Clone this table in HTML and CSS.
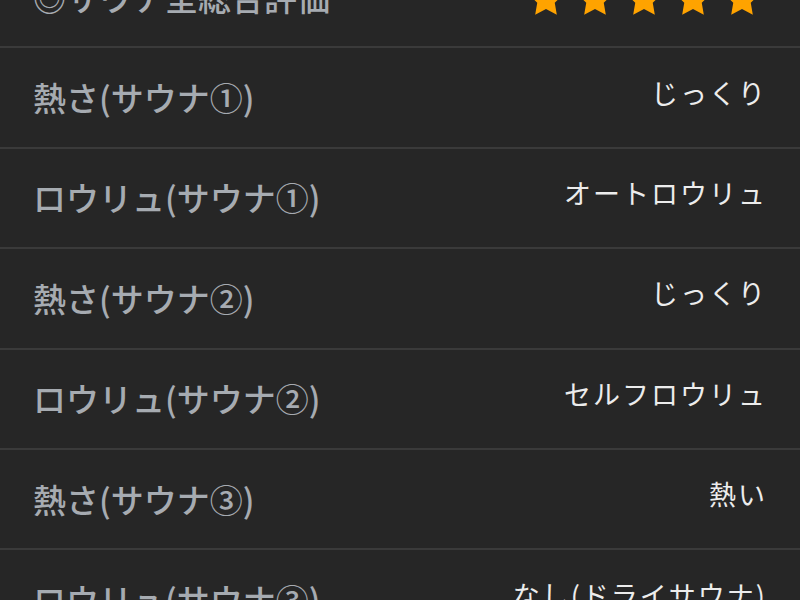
FILE: index.html
```html
<!DOCTYPE html>
<html lang="ja">
<head>
<meta charset="utf-8">
<link rel="stylesheet" href="styles.css">
</head>
<body>
<div class="list">
  <div class="row">
    <div class="label">◎サウナ全総合評価</div>
    <div class="stars">
      <svg viewBox="0 0 24 24"><path d="M12 2l3.09 6.26L22 9.27l-5 4.87 1.18 6.88L12 17.77l-6.18 3.25L7 14.14 2 9.27l6.91-1.01L12 2z"/></svg>
      <svg viewBox="0 0 24 24"><path d="M12 2l3.09 6.26L22 9.27l-5 4.87 1.18 6.88L12 17.77l-6.18 3.25L7 14.14 2 9.27l6.91-1.01L12 2z"/></svg>
      <svg viewBox="0 0 24 24"><path d="M12 2l3.09 6.26L22 9.27l-5 4.87 1.18 6.88L12 17.77l-6.18 3.25L7 14.14 2 9.27l6.91-1.01L12 2z"/></svg>
      <svg viewBox="0 0 24 24"><path d="M12 2l3.09 6.26L22 9.27l-5 4.87 1.18 6.88L12 17.77l-6.18 3.25L7 14.14 2 9.27l6.91-1.01L12 2z"/></svg>
      <svg viewBox="0 0 24 24"><path d="M12 2l3.09 6.26L22 9.27l-5 4.87 1.18 6.88L12 17.77l-6.18 3.25L7 14.14 2 9.27l6.91-1.01L12 2z"/></svg>
    </div>
  </div>
  <div class="row">
    <div class="label">熱さ(サウナ①)</div>
    <div class="value">じっくり</div>
  </div>
  <div class="row">
    <div class="label">ロウリュ(サウナ①)</div>
    <div class="value">オートロウリュ</div>
  </div>
  <div class="row">
    <div class="label">熱さ(サウナ②)</div>
    <div class="value">じっくり</div>
  </div>
  <div class="row">
    <div class="label">ロウリュ(サウナ②)</div>
    <div class="value">セルフロウリュ</div>
  </div>
  <div class="row">
    <div class="label">熱さ(サウナ③)</div>
    <div class="value">熱い</div>
  </div>
  <div class="row">
    <div class="label">ロウリュ(サウナ③)</div>
    <div class="value">なし(ドライサウナ)</div>
  </div>
</div>
</body>
</html>
```

FILE: styles.css
```css
html, body {
  margin: 0;
  padding: 0;
  background: #262626;
  overflow: hidden;
}
body {
  font-family: "Noto Sans CJK JP", "Noto Sans", sans-serif;
}
.list {
  margin-top: -52px;
}
.row {
  display: flex;
  justify-content: space-between;
  align-items: center;
  height: 98.4px;
  padding: 0 35px 0 33px;
  border-bottom: 2px solid #3a3a3a;
}
.label {
  font-size: 33px;
  font-weight: 500;
  color: #a6abb1;
  line-height: 1;
}
.value {
  font-size: 27px;
  font-weight: 400;
  color: #ececec;
  letter-spacing: 2px;
  margin-right: -2px;
  line-height: 1;
  padding-bottom: 11px;
}
.stars {
  display: flex;
  gap: 7px;
  margin-right: 2px;
  margin-top: 4px;
}
.stars svg {
  width: 42px;
  height: 42px;
  fill: #ffa300;
}
```
